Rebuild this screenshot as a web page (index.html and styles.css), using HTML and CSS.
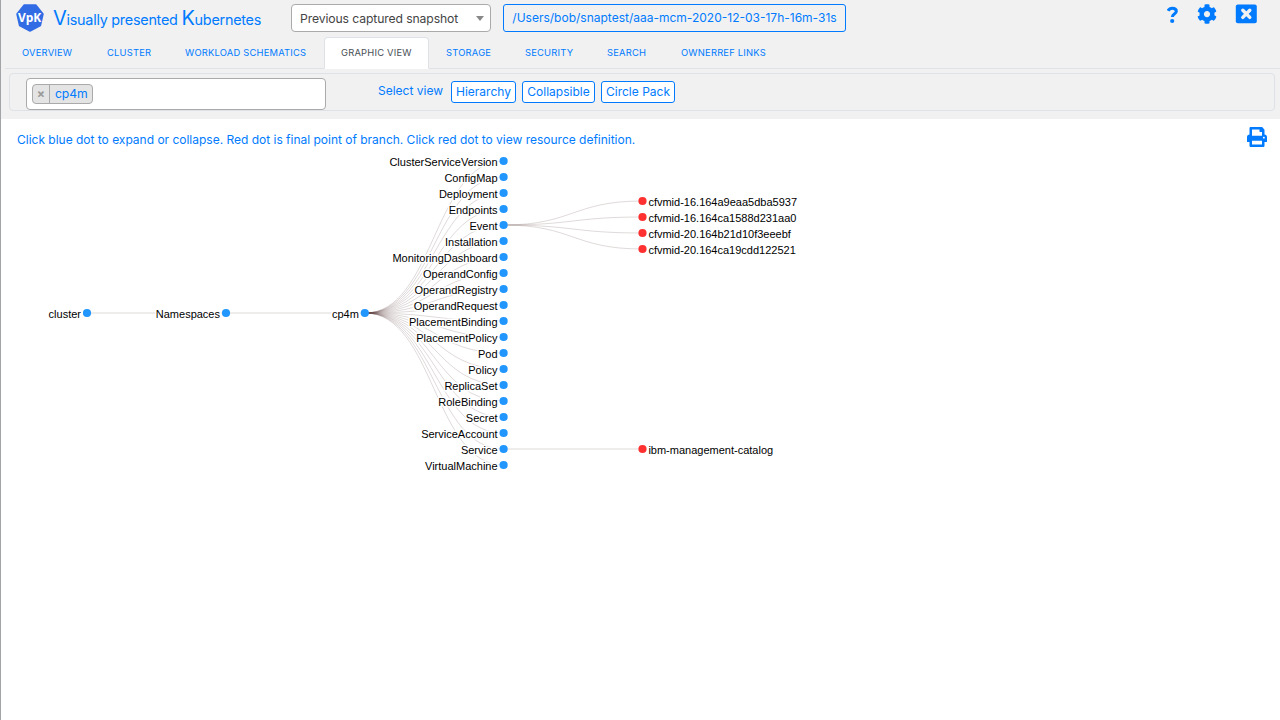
FILE: index.html
```html
<!DOCTYPE html>
<html lang="en">
<head>
<meta charset="utf-8">
<title>VpK</title>
<link rel="stylesheet" href="styles.css">
</head>
<body>
<div class="app">
  <header class="header">
    <div class="topbar">
      <svg class="logo" width="30" height="30" viewBox="0 0 30 30"><path d="M9 2.100 H21 L28 11 L25.400 22.600 L15 28 L4.600 22.600 L2 11 Z" fill="#326ce5" stroke="#326ce5" stroke-width="1.500" stroke-linejoin="round"/><text class="logo-text" x="14.600" y="18.600" text-anchor="middle">VpK</text></svg>
      <div class="brand"><span class="cap">V</span>isually presented <span class="cap">K</span>ubernetes</div>
      <div class="select"><span>Previous captured snapshot</span><i class="caret"></i></div>
      <button class="path">/Users/bob/snaptest/aaa-mcm-2020-12-03-17h-16m-31s</button>
      <div class="tools">
        <svg width="12" height="18" viewBox="0 0 12 18"><path d="M1.100 4.800 C1.900 3 3.400 2.200 5.300 2.200 C7.900 2.200 9.300 3.500 9.300 5.300 C9.300 8.200 5.400 8 5.400 10.900" fill="none" stroke="#007bff" stroke-width="3.100"/><circle cx="5.200" cy="15" r="2.100" fill="#007bff"/></svg>
        <svg class="gear" width="20" height="20" viewBox="0 0 512 512"><path fill="#007bff" d="M487.400 315.700l-42.600-24.600c4.300-23.200 4.300-47 0-70.200l42.600-24.600c4.900-2.800 7.100-8.600 5.500-14-11.100-35.600-30-67.800-54.700-94.600-3.800-4.100-10-5.100-14.800-2.300L380.800 110c-17.900-15.400-38.500-27.300-60.800-35.100V25.800c0-5.600-3.900-10.500-9.400-11.700-36.700-8.200-74.300-7.800-109.200 0-5.500 1.200-9.400 6.100-9.400 11.700V75c-22.200 7.900-42.800 19.800-60.800 35.100L88.700 85.500c-4.900-2.800-11-1.900-14.800 2.300-24.700 26.700-43.600 58.900-54.700 94.600-1.700 5.400.6 11.200 5.500 14L67.300 221c-4.300 23.200-4.300 47 0 70.200l-42.600 24.600c-4.900 2.800-7.100 8.600-5.500 14 11.100 35.600 30 67.800 54.700 94.600 3.800 4.100 10 5.100 14.800 2.300l42.600-24.600c17.900 15.400 38.500 27.300 60.800 35.100v49.200c0 5.600 3.900 10.500 9.400 11.700 36.700 8.200 74.300 7.800 109.200 0 5.500-1.200 9.400-6.100 9.400-11.700v-49.200c22.200-7.900 42.800-19.800 60.800-35.100l42.600 24.600c4.900 2.800 11 1.900 14.800-2.300 24.700-26.700 43.600-58.900 54.700-94.600 1.500-5.500-.7-11.300-5.600-14.100zM256 336c-44.100 0-80-35.900-80-80s35.900-80 80-80 80 35.900 80 80-35.900 80-80 80z"/></svg>
        <svg class="close" width="22" height="20" viewBox="0 0 22 20"><rect x=".8" y=".5" width="21" height="18.800" rx="2" fill="#007bff"/><path d="M7.800 6.200 L14.800 13.400 M14.800 6.200 L7.800 13.400" stroke="#f1f1f1" stroke-width="3.400" stroke-linecap="round"/></svg>
      </div>
    </div>
    <nav class="tabs">
      <a class="tab t1">OVERVIEW</a><a class="tab t2">CLUSTER</a><a class="tab t3">WORKLOAD SCHEMATICS</a><a class="tab active">GRAPHIC VIEW</a><a class="tab t5">STORAGE</a><a class="tab t6">SECURITY</a><a class="tab t7">SEARCH</a><a class="tab t8">OWNERREF LINKS</a>
    </nav>
    <div class="filter">
      <div class="chips"><span class="chip"><span class="x">×</span><span class="chip-name">cp4m</span></span></div>
      <span class="select-view">Select view</span>
      <button class="view v1">Hierarchy</button>
      <button class="view v2">Collapsible</button>
      <button class="view v3">Circle Pack</button>
    </div>
  </header>
  <main class="content">
    <div class="hint-row">
      <span class="hint">Click blue dot to expand or collapse. Red dot is final point of branch. Click red dot to view resource definition.</span>
      <svg class="print" width="20" height="20" viewBox="0 0 512 512"><path fill="#007bff" d="M448 192V77.250c0-8.490-3.370-16.620-9.370-22.630L393.370 9.370c-6-6-14.140-9.370-22.630-9.370H96C78.330 0 64 14.330 64 32v160c-35.350 0-64 28.650-64 64v112c0 8.840 7.160 16 16 16h48v96c0 17.670 14.330 32 32 32h320c17.670 0 32-14.330 32-32v-96h48c8.840 0 16-7.160 16-16V256c0-35.350-28.650-64-64-64zm-64 256H128v-96h256v96zm0-224H128V64h192v48c0 8.840 7.160 16 16 16h48v96zm48 72c-13.250 0-24-10.750-24-24 0-13.260 10.750-24 24-24s24 10.740 24 24c0 13.250-10.750 24-24 24z"/></svg>
    </div>
    <svg class="tree" width="1279" height="330" viewBox="1 150 1279 330">
      <g class="links">
        <path d="M87 313H226M226 313H365"/>
        <path d="M365 313C434 313 434 161 503.500 161"/><path d="M365 313C434 313 434 177 503.500 177"/><path d="M365 313C434 313 434 193 503.500 193"/><path d="M365 313C434 313 434 209 503.500 209"/><path d="M365 313C434 313 434 225 503.500 225"/><path d="M365 313C434 313 434 241 503.500 241"/><path d="M365 313C434 313 434 257 503.500 257"/><path d="M365 313C434 313 434 273 503.500 273"/><path d="M365 313C434 313 434 289 503.500 289"/><path d="M365 313C434 313 434 305 503.500 305"/><path d="M365 313C434 313 434 321 503.500 321"/><path d="M365 313C434 313 434 337 503.500 337"/><path d="M365 313C434 313 434 353 503.500 353"/><path d="M365 313C434 313 434 369 503.500 369"/><path d="M365 313C434 313 434 385 503.500 385"/><path d="M365 313C434 313 434 401 503.500 401"/><path d="M365 313C434 313 434 417 503.500 417"/><path d="M365 313C434 313 434 433 503.500 433"/><path d="M365 313C434 313 434 449 503.500 449"/><path d="M365 313C434 313 434 465 503.500 465"/>
        <path d="M503.500 225C573 225 573 201 642.500 201"/><path d="M503.500 225C573 225 573 217 642.500 217"/><path d="M503.500 225C573 225 573 233 642.500 233"/><path d="M503.500 225C573 225 573 249 642.500 249"/><path d="M503.500 449H642.500"/>
      </g>
      <g class="dots">
        <circle cx="87" cy="313" r="4.100"/><circle cx="226" cy="313" r="4.100"/><circle cx="364.800" cy="313" r="4.100"/>
        <circle cx="503.600" cy="161" r="4.100"/><circle cx="503.600" cy="177" r="4.100"/><circle cx="503.600" cy="193" r="4.100"/><circle cx="503.600" cy="209" r="4.100"/><circle cx="503.600" cy="225" r="4.100"/><circle cx="503.600" cy="241" r="4.100"/><circle cx="503.600" cy="257" r="4.100"/><circle cx="503.600" cy="273" r="4.100"/><circle cx="503.600" cy="289" r="4.100"/><circle cx="503.600" cy="305" r="4.100"/><circle cx="503.600" cy="321" r="4.100"/><circle cx="503.600" cy="337" r="4.100"/><circle cx="503.600" cy="353" r="4.100"/><circle cx="503.600" cy="369" r="4.100"/><circle cx="503.600" cy="385" r="4.100"/><circle cx="503.600" cy="401" r="4.100"/><circle cx="503.600" cy="417" r="4.100"/><circle cx="503.600" cy="433" r="4.100"/><circle cx="503.600" cy="449" r="4.100"/><circle cx="503.600" cy="465" r="4.100"/>
      </g>
      <g class="dots leaf"><circle cx="642.500" cy="201" r="4.100"/><circle cx="642.500" cy="217" r="4.100"/><circle cx="642.500" cy="233" r="4.100"/><circle cx="642.500" cy="249" r="4.100"/><circle cx="642.500" cy="449" r="4.100"/></g>
      <g class="labels end">
        <text x="81" y="318">cluster</text><text x="220" y="318">Namespaces</text><text x="358.800" y="318">cp4m</text>
        <text x="497.600" y="166">ClusterServiceVersion</text><text x="497.600" y="182">ConfigMap</text><text x="497.600" y="198">Deployment</text><text x="497.600" y="214">Endpoints</text><text x="497.600" y="230">Event</text><text x="497.600" y="246">Installation</text><text x="497.600" y="262">MonitoringDashboard</text><text x="497.600" y="278">OperandConfig</text><text x="497.600" y="294">OperandRegistry</text><text x="497.600" y="310">OperandRequest</text><text x="497.600" y="326">PlacementBinding</text><text x="497.600" y="342">PlacementPolicy</text><text x="497.600" y="358">Pod</text><text x="497.600" y="374">Policy</text><text x="497.600" y="390">ReplicaSet</text><text x="497.600" y="406">RoleBinding</text><text x="497.600" y="422">Secret</text><text x="497.600" y="438">ServiceAccount</text><text x="497.600" y="454">Service</text><text x="497.600" y="470">VirtualMachine</text>
      </g>
      <g class="labels">
        <text x="648.400" y="206">cfvmid-16.164a9eaa5dba5937</text><text x="648.400" y="222">cfvmid-16.164ca1588d231aa0</text><text x="648.400" y="238">cfvmid-20.164b21d10f3eeebf</text><text x="648.400" y="254">cfvmid-20.164ca19cdd122521</text><text x="648.400" y="454">ibm-management-catalog</text>
      </g>
    </svg>
  </main>
</div>
</body>
</html>
```
FILE: styles.css
```css
* { box-sizing: border-box; }
body { margin: 0; font-family: Inter, "Liberation Sans", sans-serif; font-size: 12px; color: #007bff; background: #fff; overflow: hidden; }
button { font-family: inherit; color: #007bff; background: transparent; border: 1px solid #007bff; border-radius: 3px; padding: 0; white-space: nowrap; }
.app { height: 720px; border-left: 1px solid #a2a4a6; }
.header { height: 119px; background: #f1f1f1; display: flex; flex-direction: column; }
.topbar { height: 37px; display: flex; align-items: flex-start; padding-left: 14px; }
.logo { margin-top: 3px; flex: none; }
.logo-text { font: 700 12px "Open Sans", sans-serif; fill: #fff; }
.brand { width: 238px; margin-left: 8px; height: 37px; line-height: 37px; font-size: 14.4px; letter-spacing: -.26px; white-space: nowrap; }
.cap { font-size: 20px; }
.select { flex: none; width: 200px; height: 28px; margin-top: 4px; padding: 0 6px 0 8px; border: 1px solid #aaa; border-radius: 4px; background: #fff; color: #444; display: flex; align-items: center; justify-content: space-between; font-size: 12.2px; letter-spacing: -.11px; white-space: nowrap; }
.caret { border: 4px solid transparent; border-top: 5px solid #888; border-bottom: 0; }
.path { width: 343px; height: 28px; margin: 4px 0 0 12px; font-size: 12px; line-height: 26px; }
.tools { flex: 1; display: flex; align-items: flex-start; justify-content: flex-end; padding: 4px 23px 0 0; }
.tools svg { margin-top: 2px; flex: none; }
.tools .gear { margin: 0 0 0 18px; }
.tools .close { margin: 0 0 0 18px; }
.tabs { height: 32px; margin: 0 0 0 4px; border-bottom: 1px solid #dee2e6; display: flex; font-size: 9.4px; letter-spacing: .2px; }
.tab { height: 32px; line-height: 31px; flex: none; white-space: nowrap; padding-left: 17px; }
.t1 { width: 85px; } .t2 { width: 78px; } .t3 { width: 156px; }
.active { width: 105px; padding-left: 16px; background: #fff; color: #495057; border: 1px solid #dee2e6; border-bottom-color: #fff; border-radius: 4px 4px 0 0; line-height: 30px; }
.t5 { width: 79px; } .t6 { width: 82px; } .t7 { width: 74px; } .t8 { width: 120px; }
.filter { height: 38px; margin: 4px 5px 0 8px; border: 1px solid #dee2e6; border-radius: 4px; display: flex; align-items: flex-start; padding-left: 16px; }
.chips { width: 300px; height: 32px; margin-top: 4px; padding: 5px; background: #fff; border: 1px solid #aaa; border-radius: 4px; }
.chip { display: flex; width: 61px; height: 20px; background: #e4e4e4; border: 1px solid #aaa; border-radius: 4px; line-height: 18px; font-size: 12.2px; }
.x { width: 17px; border-right: 1px solid #aaa; color: #999; font-weight: 700; text-align: center; }
.chip-name { padding-left: 5px; letter-spacing: -.1px; }
.select-view { width: 73px; margin-left: 52px; line-height: 34px; font-size: 12px; white-space: nowrap; }
.view { height: 22px; margin-top: 7px; margin-right: 6px; background: #fff; font-size: 12px; line-height: 20px; }
.v1 { width: 65px; } .v2 { width: 73px; } .v3 { width: 74px; }
.hint-row { height: 31px; display: flex; justify-content: space-between; padding: 9px 13px 0 16px; }
.hint { line-height: 24px; font-size: 12px; letter-spacing: -.01px; white-space: nowrap; }
.print { margin-top: -1px; }
.tree { display: block; }
.links { fill: none; stroke: #533; stroke-opacity: .18; stroke-width: 1; }
.dots { fill: #2196ff; }
.leaf { fill: #ff3030; }
.labels { font: 11px "Liberation Sans", Arial, sans-serif; fill: #000; stroke: #fff; stroke-width: 3px; stroke-linejoin: round; paint-order: stroke; }
.end { text-anchor: end; }
```
